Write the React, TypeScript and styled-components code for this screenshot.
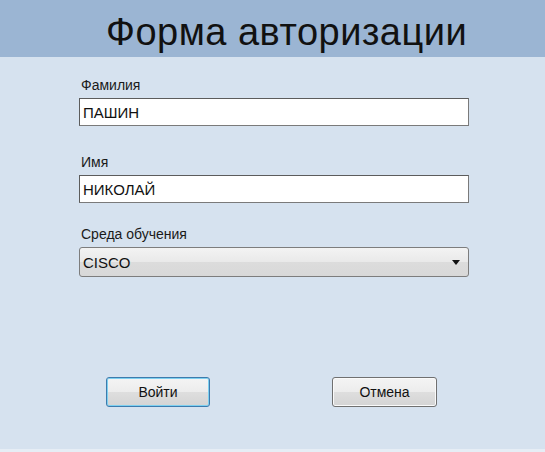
import React from 'react';
import styled, { createGlobalStyle } from 'styled-components';

const GlobalStyle = createGlobalStyle`
  html, body {
    margin: 0;
    padding: 0;
    background: #d6e2ef;
  }
  body {
    font-family: "Liberation Sans", Arial, sans-serif;
  }
`;

const Window = styled.div`
  width: 545px;
  height: 452px;
  display: flex;
  flex-direction: column;
  background: #d6e2ef;
  border-bottom: 3px solid #e6edf5;
  box-sizing: border-box;
`;

const Header = styled.header`
  height: 57px;
  background: #9bb5d3;
  display: flex;
  align-items: flex-start;
  padding: 13px 0 0 106px;
  box-sizing: border-box;
`;

const Title = styled.h1`
  margin: 0;
  font-size: 38px;
  font-weight: 400;
  color: #111;
  letter-spacing: 0.5px;
  line-height: 1;
`;

const Form = styled.form`
  display: flex;
  flex-direction: column;
  width: 390px;
  margin-left: 79px;
  padding-top: 20px;
`;

const Field = styled.div<{ gap?: number }>`
  display: flex;
  flex-direction: column;
  margin-bottom: ${p => p.gap ?? 24}px;
`;

const Label = styled.label`
  font-size: 14px;
  line-height: 16px;
  color: #1a1a1a;
  padding-left: 2px;
  margin-bottom: 5px;
`;

const TextInput = styled.input`
  height: 28px;
  box-sizing: border-box;
  border: 1px solid #7a7a7a;
  border-top-color: #5c5c5c;
  border-left-color: #5c5c5c;
  background: #fff;
  font-family: inherit;
  font-size: 15px;
  color: #111;
  padding: 0 3px;
  outline: none;
  caret-color: #000;
`;

const Select = styled.div`
  height: 30px;
  box-sizing: border-box;
  border: 1px solid #7d7d7d;
  border-radius: 3px;
  background: linear-gradient(#f3f3f3, #e9e9e9 50%, #dcdcdc 51%, #d8d8d8);
  display: flex;
  align-items: center;
  justify-content: space-between;
  padding: 0 8px 0 3px;
  font-size: 15px;
  color: #111;
`;

const Arrow = styled.span`
  width: 0;
  height: 0;
  border-left: 4px solid transparent;
  border-right: 4px solid transparent;
  border-top: 5px solid #111;
`;

const Buttons = styled.div`
  display: flex;
  justify-content: space-between;
  padding: 0 32px 0 27px;
  margin-top: 100px;
`;

const Button = styled.button<{ focused?: boolean }>`
  width: ${p => (p.focused ? 104 : 105)}px;
  height: 30px;
  box-sizing: border-box;
  border-radius: 3px;
  border: 1px solid ${p => (p.focused ? '#3d7bad' : '#707070')};
  box-shadow: ${p => (p.focused ? 'inset 0 0 0 1px #7ed0f0' : 'inset 0 0 0 1px #fafafa')};
  background: linear-gradient(#f4f4f4, #ececec 50%, #dedede 51%, #d4d4d4);
  font-family: inherit;
  font-size: 14px;
  color: #111;
  padding: 0;
`;

export default function App() {
  return (
    <>
      <GlobalStyle />
      <Window>
        <Header>
          <Title>Форма авторизации</Title>
        </Header>
        <Form onSubmit={e => e.preventDefault()}>
          <Field gap={28}>
            <Label>Фамилия</Label>
            <TextInput defaultValue="ПАШИН" />
          </Field>
          <Field gap={23}>
            <Label>Имя</Label>
            <TextInput defaultValue="НИКОЛАЙ" autoFocus />
          </Field>
          <Field gap={0}>
            <Label>Среда обучения</Label>
            <Select>
              <span>CISCO</span>
              <Arrow />
            </Select>
          </Field>
          <Buttons>
            <Button type="submit" focused>Войти</Button>
            <Button type="button">Отмена</Button>
          </Buttons>
        </Form>
      </Window>
    </>
  );
}
